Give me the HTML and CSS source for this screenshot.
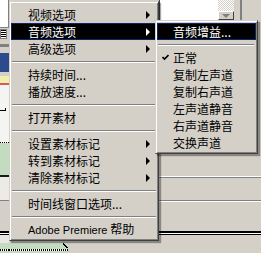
FILE: index.html
```html
<!DOCTYPE html>
<html lang="zh-CN">
<head>
<meta charset="utf-8">
<link rel="stylesheet" href="styles.css">
</head>
<body>
<div class="stage">
  <div class="app">
    <div class="lstrip">
      <div class="ls-white"></div>
      <div class="ls-gline"></div>
      <div class="ls-icon"><div class="ls-icon-lines"></div></div>
      <div class="ls-gray4"></div>
      <div class="ls-dark3"></div>
      <div class="ls-gray6"></div>
      <div class="ls-blue"></div>
      <div class="ls-gray4"></div>
      <div class="ls-yellow"></div>
      <div class="ls-red"></div>
      <div class="ls-white2"><div class="ls-tick"></div></div>
      <div class="ls-dots"></div>
      <div class="ls-green"></div>
      <div class="ls-black2"></div>
      <div class="ls-light"></div>
      <div class="ls-gline"></div>
      <div class="ls-gray-mid"></div>
      <div class="dbl"></div>
      <div class="ls-light2"></div>
      <div class="bot-green"></div>
    </div>
    <div class="mid">
      <div class="mid-fill"></div>
      <div class="mid-bottom">
        <div class="bot-green mid-green"><div class="slash"></div></div>
      </div>
    </div>
    <div class="rpanel">
      <div class="rp-top">
        <div class="rp-list"></div>
        <div class="rp-scroll">
          <div class="rp-track"></div>
          <div class="rp-btn"><div class="rp-down"></div></div>
        </div>
        <div class="rp-gap"></div>
        <div class="rp-edge"></div>
        <div class="rp-rest"></div>
      </div>
      <div class="rp-fill1"></div>
      <div class="rline-a"></div>
      <div class="rp-fill2"></div>
      <div class="rline-b"></div>
      <div class="rp-fill3"></div>
      <div class="dbl"></div>
      <div class="rp-fill4"></div>
    </div>
  </div>

  <div class="menu main">
    <div class="item"><span class="label">视频选项</span><i class="arrow"></i></div>
    <div class="item active"><span class="label">音频选项</span><i class="arrow"></i></div>
    <div class="item"><span class="label">高级选项</span><i class="arrow"></i></div>
    <div class="sep"></div>
    <div class="item"><span class="label">持续时间...</span></div>
    <div class="item"><span class="label">播放速度...</span></div>
    <div class="sep"></div>
    <div class="item"><span class="label">打开素材</span></div>
    <div class="sep"></div>
    <div class="item"><span class="label">设置素材标记</span><i class="arrow"></i></div>
    <div class="item"><span class="label">转到素材标记</span><i class="arrow"></i></div>
    <div class="item"><span class="label">清除素材标记</span><i class="arrow"></i></div>
    <div class="sep"></div>
    <div class="item"><span class="label">时间线窗口选项...</span></div>
    <div class="sep"></div>
    <div class="item"><span class="label"><span class="latin">Adobe Premiere</span> 帮助</span></div>
  </div>

  <div class="menu sub">
    <div class="item active"><span class="slot"></span><span class="label">音频增益...</span></div>
    <div class="sep"></div>
    <div class="item"><span class="slot"><svg class="check" width="7" height="7" viewBox="0 0 7 7"><path d="M0.5 3 L2.5 5 L6.5 1" fill="none" stroke="#000" stroke-width="1.6"/></svg></span><span class="label">正常</span></div>
    <div class="item"><span class="slot"></span><span class="label">复制左声道</span></div>
    <div class="item"><span class="slot"></span><span class="label">复制右声道</span></div>
    <div class="item"><span class="slot"></span><span class="label">左声道静音</span></div>
    <div class="item"><span class="slot"></span><span class="label">右声道静音</span></div>
    <div class="item"><span class="slot"></span><span class="label">交换声道</span></div>
  </div>
</div>
</body>
</html>
```

FILE: styles.css
```css
html, body {
  margin: 0;
  padding: 0;
  background: #d4d0c8;
}

.stage {
  position: relative;
  width: 261px;
  height: 253px;
  overflow: hidden;
  background: #d4d0c8;
  font-family: "Noto Sans CJK SC", "Liberation Sans", sans-serif;
  font-size: 12px;
}

/* ---------- background application ---------- */
.app {
  display: flex;
  height: 253px;
}

.lstrip {
  width: 9px;
  display: flex;
  flex-direction: column;
}
.ls-white { height: 27px; background: #fff; border-right: 1px solid #808080; box-sizing: border-box; }
.ls-gline { height: 1px; background: #808080; }
.ls-icon {
  height: 12px;
  background: #d4d0c8;
  display: flex;
  align-items: center;
}
.ls-icon-lines {
  width: 7px;
  height: 10px;
  background: #fff;
  border: 1px solid #808080;
  box-sizing: border-box;
  background-image: repeating-linear-gradient(#000 0 1px, #fff 1px 2px);
  background-size: 5px 8px;
  background-position: 0 0;
  background-repeat: no-repeat;
}
.ls-gray4 { height: 4px; background: #d4d0c8; }
.ls-dark3 { height: 3px; background: #808080; }
.ls-gray6 { height: 6px; background: #d4d0c8; }
.ls-blue { height: 19px; background: #2c4a8e; }
.ls-yellow { height: 7px; background: #f1eeae; }
.ls-red { height: 2px; background: #d85a5a; }
.ls-white2 {
  height: 57px;
  background: #f4f4f2;
  display: flex;
  flex-direction: column;
  padding-top: 23px;
  box-sizing: border-box;
}
.ls-tick { width: 6px; height: 3px; border-bottom: 1px solid #000; border-right: 1px solid #000; box-sizing: border-box; }
.ls-dots { height: 1px; background: repeating-linear-gradient(90deg, #000 0 1px, #fff 1px 2px); }
.ls-green { height: 32px; background: #c3dcbf; }
.ls-black2 { height: 2px; background: #1a1a1a; }
.ls-light { height: 23px; background: #ecebe6; }
.ls-gray-mid { height: 30px; background: #d4d0c8; }
.dbl {
  height: 4px;
  background: linear-gradient(#000 0 2px, #fff 2px 3px, #000 3px 4px);
}
.ls-light2 { height: 8px; background: #e8e6e0; }
.bot-green {
  height: 10px;
  background: #c3dcbf;
  background-image: repeating-linear-gradient(90deg, #000 0 1px, #fff 1px 2px);
  background-size: 100% 2px;
  background-position: 0 6px;
  background-repeat: no-repeat;
  background-color: #c3dcbf;
}

.mid {
  width: 150px;
  display: flex;
  flex-direction: column;
}
.mid-fill { flex: 1; background: #d4d0c8; }
.mid-bottom {
  height: 10px;
  display: flex;
  background: #d4d0c8;
}
.mid-green {
  width: 59px;
  position: relative;
}
.slash {
  position: absolute;
  right: 0;
  top: 0;
  width: 5px;
  height: 5px;
  background: linear-gradient(45deg, transparent 40%, #000 40% 60%, transparent 60%);
}

.rpanel {
  flex: 1;
  display: flex;
  flex-direction: column;
}
.rp-top {
  height: 20px;
  display: flex;
}
.rp-list { width: 58px; background: #fff; border-left: 1px solid #404040; }
.rp-scroll {
  width: 16px;
  display: flex;
  flex-direction: column;
}
.rp-track {
  flex: 1;
  background: repeating-conic-gradient(#fff 0 25%, #d4d0c8 0 50%) 0 0 / 2px 2px;
}
.rp-btn {
  height: 9px;
  background: #d4d0c8;
  border: 1px solid;
  border-color: #fff #404040 #404040 #fff;
  box-sizing: border-box;
  display: flex;
  justify-content: center;
  align-items: center;
}
.rp-down {
  width: 0;
  height: 0;
  border-left: 4px solid transparent;
  border-right: 4px solid transparent;
  border-top: 4px solid #808080;
}
.rp-gap { width: 6px; background: #d4d0c8; }
.rp-edge { width: 2px; background: #808080; }
.rp-rest { flex: 1; background: #d4d0c8; }
.rp-fill1 { height: 156px; background: #d4d0c8; }
.rline-a { height: 2px; background: linear-gradient(#fff 0 1px, #808080 1px 2px); }
.rp-fill2 { height: 22px; background: #d4d0c8; }
.rline-b { height: 2px; background: linear-gradient(#808080 0 1px, #fff 1px 2px); }
.rp-fill3 { height: 29px; background: #d4d0c8; }
.rp-fill4 { flex: 1; background: #d4d0c8; }

/* ---------- menus ---------- */
.menu {
  position: absolute;
  box-sizing: border-box;
  background: #d4d0c8;
  border: 1px solid;
  border-color: #d4d0c8 #404040 #404040 #d4d0c8;
  box-shadow: inset 1px 1px #fff, inset -1px -1px #808080, 2px 2px 1px rgba(0, 0, 0, 0.35);
  display: flex;
  flex-direction: column;
}
.main {
  left: 9px;
  top: 1px;
  width: 150px;
  padding: 4px 1px 2px 1px;
}
.sub {
  left: 155px;
  top: 20px;
  width: 103px;
  padding: 2px 1px 2px 1px;
}

.item {
  height: 17px;
  display: flex;
  align-items: center;
  color: #000;
  line-height: 17px;
  white-space: nowrap;
}
.main .item { padding-left: 17px; }
.sub .item { padding-left: 5px; }

.label { flex: 1; }
.latin {
  font-family: "Liberation Sans", sans-serif;
  font-size: 11px;
}

.item.active {
  background: #000;
  color: #fff;
  box-shadow: inset 0 0 0 1px #0a246a;
}

.arrow {
  width: 0;
  height: 0;
  border-top: 4px solid transparent;
  border-bottom: 4px solid transparent;
  border-left: 4px solid #000;
  margin-right: 7px;
}
.item.active .arrow { border-left-color: #fff; }

.slot {
  width: 11px;
  display: flex;
  align-items: center;
}
.check { display: block; }

.sep {
  height: 2px;
  margin: 4px 1px 3px 1px;
  background: linear-gradient(#808080 0 1px, #fff 1px 2px);
}
.sub .sep { margin: 4px 2px 3px 1px; }
```
